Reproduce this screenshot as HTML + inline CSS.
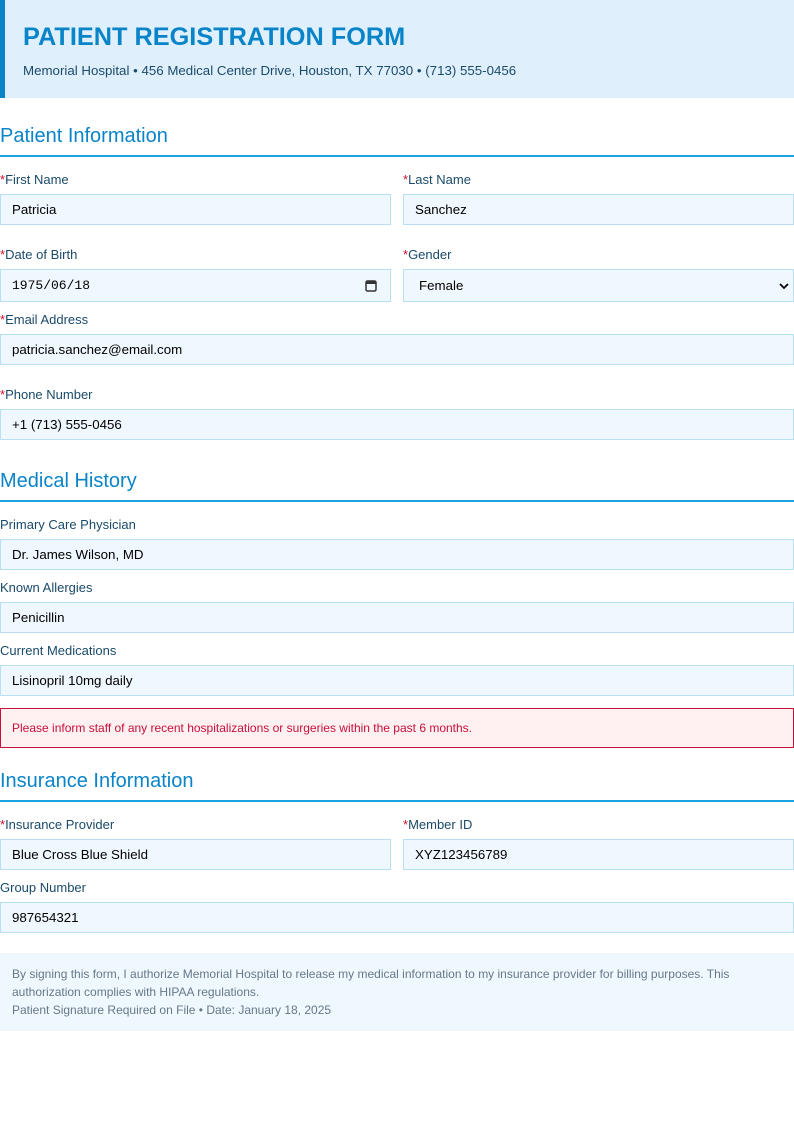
<!DOCTYPE html>
<html><head><meta charset="utf-8"><style>
*{margin:0;padding:0;box-sizing:border-box}
body{width:794px;height:1123px;background:#fff;font-family:"Liberation Sans",Arial,sans-serif;position:relative;overflow:hidden}
.a{position:absolute}
.hdr{left:0;top:0;width:794px;height:98px;background:#dff0fc;border-left:5px solid #0a84c8}
.t{left:23px;top:23px;font-size:25.3px;font-weight:bold;color:#0a84c8}
.sub{left:23px;top:63px;font-size:13.3px;color:#1a4a6a}
.h2{left:0;font-size:20px;color:#0a84c8;line-height:24px}
.ln{left:0;width:794px;height:2px;background:#1aa3e0}
.lb{font-size:13px;color:#1a4a6a;line-height:16px}
.lb b{color:#d0102a;font-weight:normal}
.in{background:#f0f8ff;border:1px solid #b8e0f5;font-size:13.3px;color:#000;padding-left:11px;display:flex;align-items:center}
</style></head><body>
<div class="a hdr"></div>
<div class="a t">PATIENT REGISTRATION FORM</div>
<div class="a sub">Memorial Hospital • 456 Medical Center Drive, Houston, TX 77030 • (713) 555-0456</div>

<div class="a h2" style="top:124px">Patient Information</div>
<div class="a ln" style="top:155px"></div>
<div class="a lb" style="left:0;top:172px"><b>*</b>First Name</div>
<div class="a lb" style="left:403px;top:172px"><b>*</b>Last Name</div>
<div class="a in" style="left:0;top:194px;width:391px;height:31px">Patricia</div>
<div class="a in" style="left:403px;top:194px;width:391px;height:31px">Sanchez</div>
<div class="a lb" style="left:0;top:247px"><b>*</b>Date of Birth</div>
<div class="a lb" style="left:403px;top:247px"><b>*</b>Gender</div>
<div class="a in" style="left:0;top:269px;width:391px;height:33px;font-family:'Liberation Mono',monospace;font-size:13px">1975/06/18
<svg class="a" style="right:13px;top:9px" width="12" height="13" viewBox="0 0 12 13"><rect x="1" y="2" width="10" height="10" rx="1.5" fill="none" stroke="#333" stroke-width="1.5"/><rect x="1" y="2" width="10" height="3" fill="#333"/></svg></div>
<div class="a in" style="left:403px;top:269px;width:391px;height:33px;padding-left:15px">Female
<svg class="a" style="right:4px;top:12px" width="10" height="8" viewBox="0 0 10 8"><path d="M1 2 L5 6 L9 2" fill="none" stroke="#000" stroke-width="1.8"/></svg></div>
<div class="a lb" style="left:0;top:312px"><b>*</b>Email Address</div>
<div class="a in" style="left:0;top:334px;width:794px;height:31px">patricia.sanchez@email.com</div>
<div class="a lb" style="left:0;top:387px"><b>*</b>Phone Number</div>
<div class="a in" style="left:0;top:409px;width:794px;height:31px">+1 (713) 555-0456</div>

<div class="a h2" style="top:469px">Medical History</div>
<div class="a ln" style="top:500px"></div>
<div class="a lb" style="left:0;top:517px">Primary Care Physician</div>
<div class="a in" style="left:0;top:539px;width:794px;height:31px">Dr. James Wilson, MD</div>
<div class="a lb" style="left:0;top:580px">Known Allergies</div>
<div class="a in" style="left:0;top:602px;width:794px;height:31px">Penicillin</div>
<div class="a lb" style="left:0;top:643px">Current Medications</div>
<div class="a in" style="left:0;top:665px;width:794px;height:31px">Lisinopril 10mg daily</div>
<div class="a" style="left:0;top:708px;width:794px;height:40px;background:#fff0f2;border:1px solid #c8103a;font-size:12px;color:#c8103a;padding-left:11px;line-height:38px">Please inform staff of any recent hospitalizations or surgeries within the past 6 months.</div>

<div class="a h2" style="top:769px">Insurance Information</div>
<div class="a ln" style="top:800px"></div>
<div class="a lb" style="left:0;top:817px"><b>*</b>Insurance Provider</div>
<div class="a lb" style="left:403px;top:817px"><b>*</b>Member ID</div>
<div class="a in" style="left:0;top:839px;width:391px;height:31px">Blue Cross Blue Shield</div>
<div class="a in" style="left:403px;top:839px;width:391px;height:31px">XYZ123456789</div>
<div class="a lb" style="left:0;top:880px">Group Number</div>
<div class="a in" style="left:0;top:902px;width:794px;height:31px">987654321</div>

<div class="a" style="left:0;top:953px;width:794px;height:78px;background:#f0f8ff;padding:12px 12px;font-size:12px;color:#667788;line-height:18px">By signing this form, I authorize Memorial Hospital to release my medical information to my insurance provider for billing purposes. This authorization complies with HIPAA regulations.<br>Patient Signature Required on File • Date: January 18, 2025</div>
</body></html>
